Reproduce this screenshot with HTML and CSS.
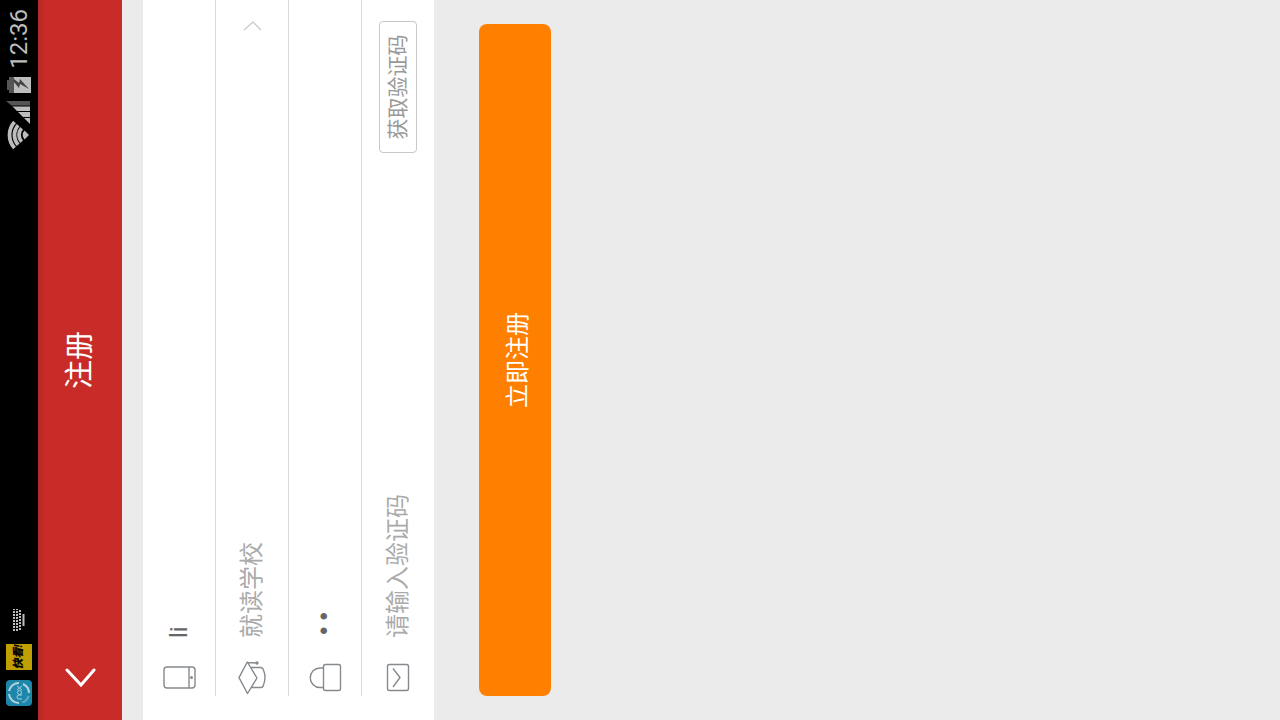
FILE: index.html
```html
<!DOCTYPE html>
<html lang="zh-CN">
<head>
<meta charset="utf-8">
<title>注册</title>
<link rel="stylesheet" href="styles.css">
</head>
<body>
<div class="screen">
  <div class="status">
    <svg class="app-icon" viewBox="0 0 26 26" aria-hidden="true">
      <rect width="26" height="26" rx="4" fill="#1c87aa"/>
      <g fill="none" stroke="#b5d2dc" stroke-width="2">
        <path d="M3 13a10 10 0 0 1 9-10"/><path d="M15 3a10 10 0 0 1 8 10"/>
        <path d="M22 17a10 10 0 0 1-9 6"/><path d="M10 22.500a10 10 0 0 1-6.500-6" stroke="#5fa9c1"/>
      </g>
      <g fill="none" stroke="#a9cedb" stroke-width="1">
        <path d="M7 16v-3q0-2 2-2t2 2v3M16 11l4 5M20 11l-4 5"/><circle cx="13.500" cy="13.500" r="2"/>
      </g>
    </svg>
    <span class="kuaikan">快看!</span>
    <svg class="keyboard" viewBox="0 0 22 12" aria-hidden="true">
      <g fill="none" stroke="#bdbdbd" stroke-width="2">
        <path d="M0 1h22" stroke-dasharray="2 1"/><path d="M0 4h22" stroke-dasharray="2 1"/>
        <path d="M1 7h20" stroke-dasharray="2 1"/><path d="M5 10.500h12"/>
      </g>
    </svg>
    <span class="spacer"></span>
    <svg class="network" viewBox="0 0 50 26" aria-hidden="true">
      <g fill="none" stroke="#bdbdbd" stroke-width="3.800">
        <path d="M2 8.500A19.500 19.500 0 0 1 28 8.500M5.300 12.200A14.500 14.500 0 0 1 24.700 12.200M8.300 15.600A10 10 0 0 1 21.700 15.600"/>
      </g>
      <path d="M15 23L10.500 18.500A6.500 6.500 0 0 1 19.500 18.500Z" fill="#bdbdbd"/>
      <path d="M26 24L44 6V24Z" fill="#bdbdbd"/>
      <path d="M44 6L49 0V24H44Z" fill="#555"/>
      <path d="M32.500 14V24M38.500 8V24M44 4V24" stroke="#000" stroke-width="1"/>
    </svg>
    <svg class="battery" viewBox="0 0 16 24" aria-hidden="true">
      <path d="M3 0h10v2h3v5H0V2h3Z" fill="#555"/>
      <path d="M0 7h16v17H0Z" fill="#bdbdbd"/>
      <path d="M12 6L5 12l4 1-5 9 10-9-4-1 4-5Z" fill="#444"/>
    </svg>
    <time class="clock">12:36</time>
  </div>
  <header class="header">
    <button class="back" type="button" aria-label="返回">
      <svg viewBox="0 0 20 32" aria-hidden="true"><path d="M18 3L3 17l15 13" fill="none" stroke="#fff" stroke-width="3" stroke-linecap="round"/></svg>
    </button>
    <h1 class="title">注册</h1>
  </header>
  <form class="form">
    <div class="fields">
      <div class="row">
        <svg class="icon" viewBox="0 0 36 40" aria-hidden="true"><rect x="8" y="5" width="21" height="31" rx="3"/><path d="M8 30h21"/><circle class="dot" cx="18.500" cy="32.500" r=".8"/></svg>
        <input class="input" type="text" value="li" aria-label="用户名">
      </div>
      <div class="row">
        <svg class="icon" viewBox="0 0 36 40" aria-hidden="true"><path d="M18.300 7L34 15.300 18 25 2.500 15.500ZM33.500 15.500L33 25M28.500 18.500V29Q28 31 26 31.500 18.500 34.500 11 31.500 8.500 31 8.500 29V19.500"/><circle class="dot" cx="33" cy="25" r="1"/></svg>
        <input class="input" type="text" placeholder="就读学校" aria-label="就读学校">
        <svg class="more" viewBox="0 0 10 20" aria-hidden="true"><path d="M1 2l8 9-8 8"/></svg>
      </div>
      <div class="row">
        <svg class="icon" viewBox="0 0 36 40" aria-hidden="true"><rect x="5.500" y="18.500" width="26" height="17" rx="2"/><path d="M8.500 18V15a9.750 9.750 0 0 1 19.500 0V18"/></svg>
        <input class="input password" type="password" value="li" aria-label="密码">
      </div>
      <div class="row">
        <svg class="icon" viewBox="0 0 36 40" aria-hidden="true"><rect x="5.500" y="9.500" width="26" height="21" rx="2"/><path d="M9 15l9.500 7 9-7"/></svg>
        <input class="input" type="text" placeholder="请输入验证码" aria-label="验证码">
        <button class="code" type="button">获取验证码</button>
      </div>
    </div>
    <button class="submit" type="button">立即注册</button>
  </form>
</div>
</body>
</html>
```
FILE: styles.css
```css
* { box-sizing: border-box; }

body {
  margin: 0;
  height: 100vh;
  overflow: hidden;
  background: #ebebeb;
  font-family: Roboto, "Noto Sans CJK SC", sans-serif;
}

/* Portrait phone screen turned on its side */
.screen {
  width: 100vh;
  transform-origin: top left;
  transform: translateY(100vh) rotate(-90deg);
}

button, input { font: inherit; border: 0; padding: 0; background: none; }
svg { flex: none; display: block; }

.status {
  display: flex;
  align-items: center;
  height: 38px;
  padding: 0 9px 0 14px;
  background: #000;
  color: #bdbdbd;
}
.app-icon { width: 26px; height: 26px; }
.kuaikan {
  width: 26px;
  margin: 0 13px 0 10px;
  background: #c0a000;
  color: #000;
  font-size: 11px;
  font-style: italic;
  font-weight: 900;
  line-height: 26px;
  text-align: center;
  white-space: nowrap;
}
.keyboard { width: 22px; height: 12px; }
.spacer { flex: 1; }
.network { width: 50px; height: 26px; margin-right: 7px; }
.battery { width: 16px; height: 24px; margin-right: 8px; }
.clock { font-size: 24px; line-height: 38px; }

.header {
  display: grid;
  grid-template-columns: 72px 1fr 72px;
  align-items: center;
  height: 84px;
  background: linear-gradient(#b52824, #c92c28 8px);
  color: #fff;
}
.back { display: flex; height: 84px; align-items: center; padding-left: 32px; }
.back svg { width: 20px; height: 32px; }
.title { margin: 0; font-size: 29px; font-weight: 400; line-height: 40px; text-align: center; }

.fields { margin-top: 21px; padding-left: 24px; background: #fff; }
.row {
  display: flex;
  align-items: center;
  height: 73px;
  padding-right: 21px;
  border-bottom: 1px solid #d9d9d9;
}
.row:last-child { height: 72px; border-bottom: 0; }
.icon { width: 36px; height: 40px; margin-right: 22px; fill: none; stroke: #868a8f; stroke-width: 1.4; stroke-linejoin: round; }
.icon .dot { fill: #868a8f; }
.input { flex: 1; min-width: 0; height: 40px; color: #666; font-size: 24px; outline: 0; }
.input::placeholder { color: #aaa; opacity: 1; }
.password { font-family: "Liberation Mono", monospace; }
.more { width: 10px; height: 20px; fill: none; stroke: #ccc; stroke-width: 1.4; }
.code {
  width: 132px;
  height: 38px;
  border: 1px solid #c8c8c8;
  border-radius: 4px;
  color: #999;
  font-size: 21px;
  line-height: 36px;
}
.submit {
  display: block;
  width: calc(100% - 48px);
  height: 72px;
  margin: 45px 24px 0;
  border-radius: 8px;
  background: #ff8000;
  color: #fff;
  font-size: 24px;
}
```
